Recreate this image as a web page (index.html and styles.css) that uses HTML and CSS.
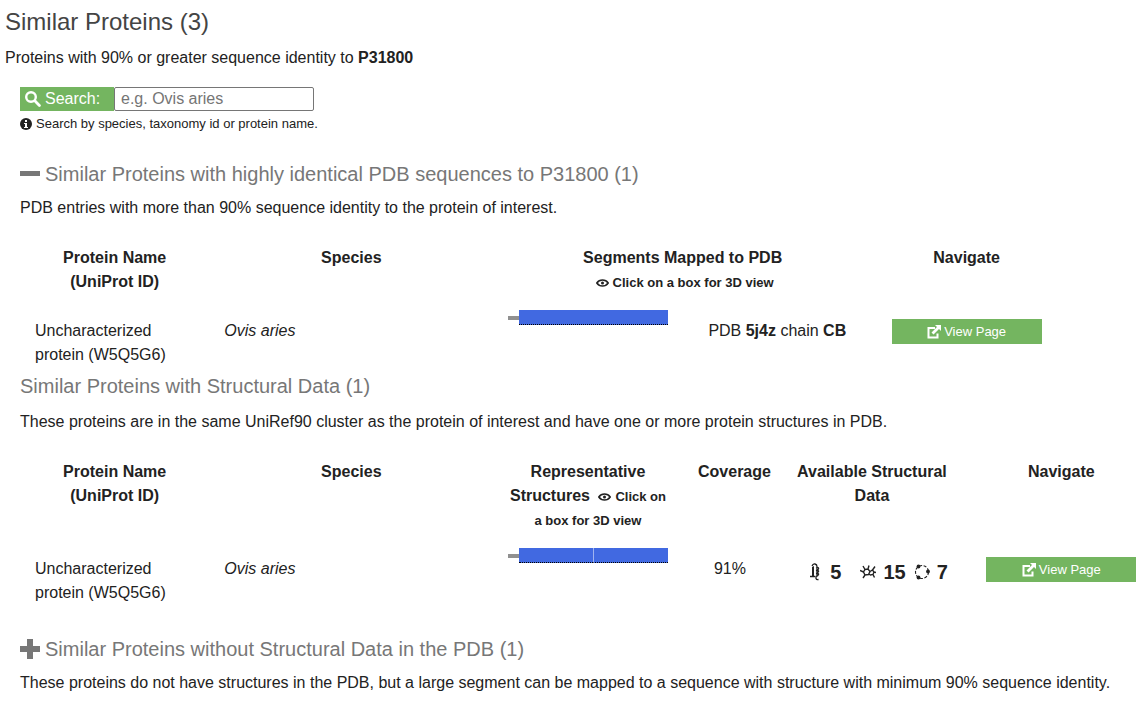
FILE: index.html
```html
<!DOCTYPE html>
<html lang="en">
<head>
<meta charset="utf-8">
<title>Similar Proteins</title>
<link rel="stylesheet" href="styles.css">
</head>
<body>
<svg class="defs" aria-hidden="true">
  <symbol id="search" viewBox="0 0 16 16"><circle cx="6" cy="6" r="4.8" fill="none" stroke="currentColor" stroke-width="2.4"/><path d="M9.800 9.800l4.600 4.600" stroke="currentColor" stroke-width="2.800" stroke-linecap="round"/></symbol>
  <symbol id="info" viewBox="0 0 12 12"><circle cx="6" cy="6" r="6" fill="currentColor"/><path d="M5 2h2v2H5zM4 5h3v4h1v1H4V9h1V6H4z" fill="#fff"/></symbol>
  <symbol id="minus" viewBox="0 0 20 20"><path d="M0 7h20v5H0z" fill="currentColor"/></symbol>
  <symbol id="plus" viewBox="0 0 20 20"><path d="M7 0h6v7h7v6h-7v7H7v-7H0V7h7z" fill="currentColor"/></symbol>
  <symbol id="eye" viewBox="0 0 13 8"><path d="M.8 4C3.500 0 9.500 0 12.200 4 9.500 8 3.500 8 .8 4z" fill="none" stroke="currentColor" stroke-width="1.500"/><circle cx="6.500" cy="4" r="1.500" fill="currentColor"/></symbol>
  <symbol id="open" viewBox="0 0 14 14"><path d="M8 3H1.500v9.500h9V8.500" fill="none" stroke="currentColor" stroke-width="2"/><path d="M8 0h6v6l-2-2-5.500 5.500-2-2L10 2z" fill="currentColor"/></symbol>
  <symbol id="chain" viewBox="0 0 16 18"><path d="M5 4l2-1v10H5z" fill="currentColor"/><path d="M3 13.500h5M5 3q1-2.500 3-2t2 2.500V13M9 5q3-1 2.500.800T9 7.500q3-.5 2.500 1T9 10.500q3-.5 2.500 1T9 13.500v2q.5 1.500 2.500 1" fill="none" stroke="currentColor" stroke-width="1.300"/></symbol>
  <symbol id="ligand" viewBox="0 0 16 16"><path d="M5 5.500l3-.5 2 2.500-1.500 3-3.500.5-1.500-3zM10 7.500l2.500-1.500 1.500 2-1 2.500-2.500.5-1.800-1M5 5.500L3 2M8 5l1-3.500M3.500 8L0 6.500M5 11l-2 3M12.500 6L15 2.500M14 8l2 .5M13 10.500l1.500 3" fill="none" stroke="currentColor" stroke-width="1.400"/></symbol>
  <symbol id="ring" viewBox="0 0 16 16"><circle cx="8" cy="8" r="6.500" fill="none" stroke="currentColor" stroke-width="1.100" stroke-dasharray="3 1.500"/><circle cx="4.500" cy="2.500" r="1.900" fill="currentColor"/><circle cx="14" cy="7.500" r="1.900" fill="currentColor"/><circle cx="4.500" cy="13.500" r="1.900" fill="currentColor"/></symbol>
</svg>
<main>
  <h1>Similar Proteins (3)</h1>
  <p class="intro">Proteins with 90% or greater sequence identity to <strong>P31800</strong></p>
  <div class="content">
    <form class="search">
      <label for="query"><svg class="icon-search"><use href="#search"/></svg>Search:</label>
      <input id="query" type="text" placeholder="e.g. Ovis aries">
    </form>
    <p class="hint"><svg class="icon-info"><use href="#info"/></svg>Search by species, taxonomy id or protein name.</p>

    <section class="mapped">
      <h2><button class="toggle" type="button"><svg class="icon-toggle"><use href="#minus"/></svg>Similar Proteins with highly identical PDB sequences to P31800 (1)</button></h2>
      <p>PDB entries with more than 90% sequence identity to the protein of interest.</p>
      <table>
        <colgroup><col class="two"><col class="three"><col class="two"><col class="two"><col class="two"><col class="one"></colgroup>
        <thead><tr>
          <th>Protein Name (UniProt ID)</th><th>Species</th>
          <th colspan="2">Segments Mapped to PDB<br><small><svg class="icon-eye"><use href="#eye"/></svg>Click on a box for 3D view</small></th>
          <th>Navigate</th>
        </tr></thead>
        <tbody><tr>
          <td>Uncharacterized protein (W5Q5G6)</td><td><em>Ovis aries</em></td>
          <td class="track"><div class="bar"><span class="line"></span><button class="segment" type="button" aria-label="View segment in 3D"></button></div></td>
          <td class="center">PDB <strong>5j4z</strong> chain <strong>CB</strong></td>
          <td class="center"><a class="view" href="#"><svg class="icon-open"><use href="#open"/></svg>View Page</a></td>
        </tr></tbody>
      </table>
    </section>

    <section class="structural">
      <h2>Similar Proteins with Structural Data (1)</h2>
      <p>These proteins are in the same UniRef90 cluster as the protein of interest and have one or more protein structures in PDB.</p>
      <table>
        <colgroup><col class="two"><col class="three"><col class="two"><col class="one"><col class="two"><col class="two"></colgroup>
        <thead><tr>
          <th>Protein Name (UniProt ID)</th><th>Species</th>
          <th>Representative Structures <small><svg class="icon-eye"><use href="#eye"/></svg>Click on a box for 3D view</small></th>
          <th class="coverage-head">Coverage</th><th>Available Structural Data</th><th>Navigate</th>
        </tr></thead>
        <tbody><tr>
          <td>Uncharacterized protein (W5Q5G6)</td><td><em>Ovis aries</em></td>
          <td class="track"><div class="bar"><span class="line"></span><button class="segment" type="button" aria-label="View first structure in 3D"></button><button class="segment" type="button" aria-label="View second structure in 3D"></button></div></td>
          <td class="center">91%</td>
          <td><div class="counts"><span class="count chains"><svg class="icon-chain"><use href="#chain"/></svg>5</span><span class="count"><svg class="icon-count"><use href="#ligand"/></svg>15</span><span class="count"><svg class="icon-count"><use href="#ring"/></svg>7</span></div></td>
          <td class="center"><a class="view" href="#"><svg class="icon-open"><use href="#open"/></svg>View Page</a></td>
        </tr></tbody>
      </table>
    </section>

    <section class="unmapped">
      <h2><button class="toggle" type="button"><svg class="icon-toggle"><use href="#plus"/></svg>Similar Proteins without Structural Data in the PDB (1)</button></h2>
      <p>These proteins do not have structures in the PDB, but a large segment can be mapped to a sequence with structure with minimum 90% sequence identity.</p>
    </section>
  </div>
</main>
</body>
</html>
```

FILE: styles.css
```css
* { box-sizing: border-box; }
html { overflow-x: hidden; }
body {
  margin: 0;
  color: #222;
  background: #fff;
  font: 16px/24px "Liberation Sans", Arial, sans-serif;
}
h1, h2, p { margin: 0; font-weight: 400; }
h1 { color: #444; font-size: 24px; line-height: 32px; }
h2 { color: #777; font-size: 20px; line-height: 28px; }
button, input { font: inherit; }
.defs { display: none; }
main { padding: 6px 0 0 5px; }
.intro { margin-top: 8px; }
.content { margin: 17px -11px 0 15px; }

.search { display: flex; height: 24px; }
.search label {
  display: flex;
  align-items: center;
  gap: 4px;
  width: 94px;
  padding-left: 5px;
  color: #fff;
  background: #74b560;
}
.search input {
  width: 200px;
  padding: 0 6px;
  border: 1px solid #767676;
  border-radius: 2px;
  color: #222;
}
.search input::placeholder { color: #757575; }
.hint {
  display: flex;
  align-items: center;
  gap: 4px;
  margin-top: 1px;
  font-size: 13px;
}
.icon-search { width: 16px; height: 16px; }
.icon-info { width: 12px; height: 12px; }

.mapped { margin-top: 24px; }
.mapped > p { margin-top: 8px; }
.structural { margin-top: 5px; }
.structural > p { margin-top: 10px; }
.unmapped { margin-top: 30px; }
.unmapped > p { margin-top: 8px; }
.toggle {
  display: flex;
  align-items: center;
  gap: 5px;
  padding: 0;
  border: 0;
  color: inherit;
  background: none;
  line-height: 28px;
}
.icon-toggle { width: 20px; height: 20px; }

table {
  width: 100%;
  margin-top: 26px;
  border-collapse: collapse;
  table-layout: fixed;
}
.one { width: 8.333%; }
.two { width: 16.667%; }
.three { width: 25%; }
th { padding: 0 15px; vertical-align: top; }
td { padding: 25px 15px 0; vertical-align: top; }
small { font-size: 13px; line-height: 16px; }
.icon-eye { width: 13px; height: 8px; margin: 0 4px; vertical-align: 0; }
.center { text-align: center; }
.coverage-head { padding-right: 6px; }
.track { padding-top: 16px; }
.bar { display: flex; align-items: center; width: 160px; height: 15px; }
.line { width: 11px; height: 4px; background: #909090; }
.segment {
  flex: 1;
  height: 15px;
  padding: 0;
  border: 0;
  border-bottom: 1px dotted #000;
  background: #4169e1;
}
.segment + .segment { border-left: 1px solid #a0b4f0; }
.view {
  display: inline-flex;
  align-items: center;
  justify-content: center;
  gap: 3px;
  width: 150px;
  height: 25px;
  color: #fff;
  background: #74b560;
  font-size: 13px;
  text-decoration: none;
  vertical-align: top;
}
.icon-open { width: 14px; height: 14px; }
.counts {
  display: flex;
  align-items: center;
  gap: 8px;
  padding: 3px 0 0 15px;
  font-size: 20px;
  font-weight: 700;
}
.count { display: flex; align-items: center; gap: 7px; }
.chains { margin-right: 11px; }
.icon-chain { width: 16px; height: 18px; }
.icon-count { width: 16px; height: 16px; }
```
